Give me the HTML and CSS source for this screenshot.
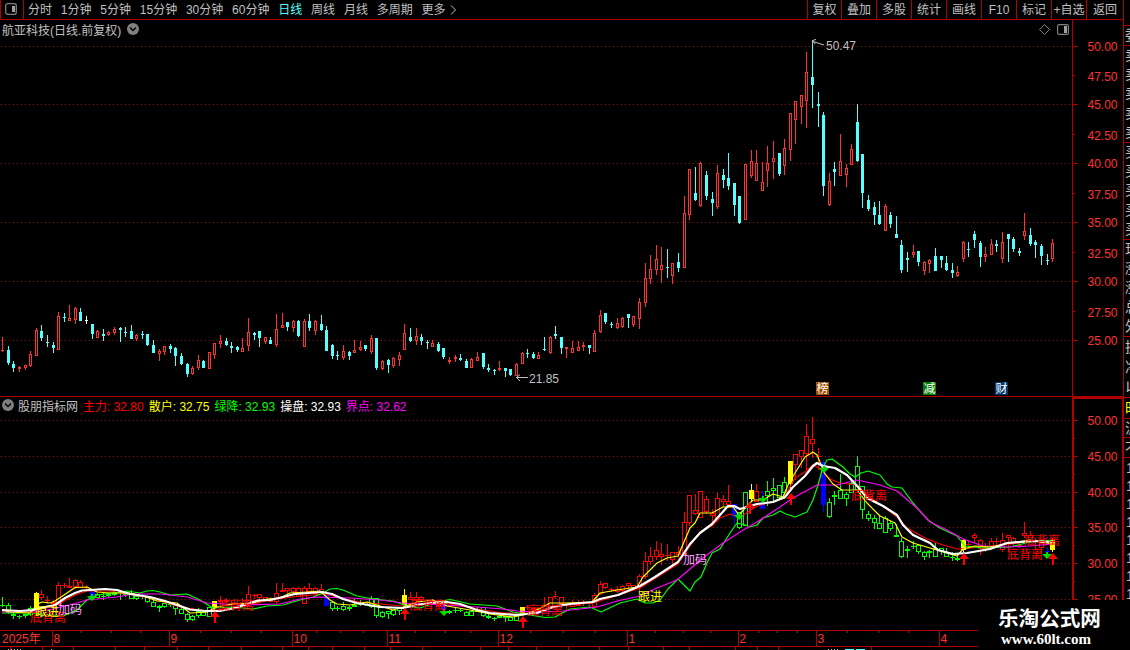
FILE: index.html
```html
<!DOCTYPE html>
<html lang="zh-CN">
<head>
  <meta charset="UTF-8" />
  <title>航亚科技 日线</title>
  <link rel="stylesheet" href="styles.css">
</head>
<body>

  <div class="toolbar">
    <div class="panel-btn">
      <svg width="12" height="12" viewBox="0 0 12 12"><rect x=".7" y=".7" width="10.6" height="10.6" rx="2" fill="none" stroke="#808080" stroke-width="1.3"/><rect x="7" y="3" width="3" height="6" fill="#a0a0a0"/></svg>
    </div>
    <div class="periods">
      <span>分时</span><span>1分钟</span><span>5分钟</span><span>15分钟</span><span>30分钟</span><span>60分钟</span><span class="active">日线</span><span>周线</span><span>月线</span><span>多周期</span><span class="more">更多</span>
      <svg width="7" height="10" viewBox="0 0 7 10"><path d="M1 0.5L5.5 5L1 9.5" fill="none" stroke="#c0c0c0"/></svg>
    </div>
    <div class="actions">
      <span>复权</span><span>叠加</span><span>多股</span><span>统计</span><span>画线</span><span>F10</span><span>标记</span><span>+自选</span><span>返回</span>
    </div>
  </div>

  <div class="content">
    <div class="charts">
      <div class="pane price">
        <svg id="price" width="1123" height="377" viewBox="0 20 1123 377"></svg>
        <div class="title">
          <span>航亚科技(日线.前复权)</span>
          <svg width="12" height="12" viewBox="0 0 12 12"><circle cx="6" cy="6" r="6" fill="#808080"/><path d="M3 4.5L6 7.5L9 4.5" fill="none" stroke="#000" stroke-width="1.5"/></svg>
        </div>
        <div class="tools">
          <svg width="11" height="11" viewBox="0 0 11 11"><path d="M5.5 .5L10.5 5.5L5.5 10.5L.5 5.5Z" fill="none" stroke="#808080"/></svg>
          <svg width="12" height="11" viewBox="0 0 12 11"><rect x=".6" y=".6" width="10.8" height="9.8" rx="1.5" fill="none" stroke="#808080" stroke-width="1.2"/><rect x="7" y="2" width="3" height="7" fill="#a0a0a0"/></svg>
        </div>
      </div>

      <div class="pane indicator">
        <svg id="indicator" width="1123" height="233" viewBox="0 397 1123 233"></svg>
        <div class="legend">
          <svg width="12" height="12" viewBox="0 0 12 12"><circle cx="6" cy="6" r="6" fill="#808080"/><path d="M3 4.5L6 7.5L9 4.5" fill="none" stroke="#000" stroke-width="1.5"/></svg>
          <span class="name">股朋指标网</span>
          <span class="red">主力: 32.80</span>
          <span class="yellow">散户: 32.75</span>
          <span class="green">绿降: 32.93</span>
          <span class="white">操盘: 32.93</span>
          <span class="magenta">界点: 32.62</span>
        </div>
      </div>

      <svg id="timeline" width="1123" height="20" viewBox="0 630 1123 20"></svg>
    </div>

    <div class="quote">
      <div class="rows first"><span>委</span></div>
      <div class="rows"><span>卖</span><span>卖</span><span>卖</span><span>卖</span><span>卖</span></div>
      <div class="rows"><span>买</span><span>买</span><span>买</span><span>买</span><span>买</span></div>
      <div class="rows"><span>现</span><span>涨</span><span>涨</span><span>总</span><span>外</span></div>
      <div class="rows short"><span>换</span><span>净</span><span>以</span></div>
      <div class="rows tab"><span class="yellow">时</span></div>
      <div class="rows one"><span>沪</span></div>
      <div class="rows one"><span>不</span></div>
      <div class="ticks"><span>14</span><span>14</span><span>14</span><span>14</span><span>14</span><span>14</span><span>14</span><span>14</span></div>
    </div>
  </div>

  <div class="brand">
    <div class="brand-name">乐淘公式网</div>
    <div class="brand-url">www.60lt.com</div>
  </div>

  <script src="script.js"></script>
</body>
</html>
```

FILE: styles.css
```css
body {
  margin: 0;
  width: 1130px;
  height: 650px;
  overflow: hidden;
  background: #000;
  color: #c0c0c0;
  font-family: "Liberation Sans", "Noto Sans CJK SC", sans-serif;
  font-size: 12px;
  position: relative;
}

svg {
  display: block;
  flex: none;
}

.toolbar {
  display: flex;
  width: 1124px;
  height: 20px;
  box-sizing: border-box;
  border-bottom: 1px solid #b00000;
  border-right: 1px solid #b00000;
  line-height: 20px;
  white-space: nowrap;
}

.panel-btn {
  width: 22px;
  display: flex;
  align-items: center;
  justify-content: center;
  border-left: 1px solid #b00000;
  border-right: 1px solid #b00000;
}

.panel-btn svg {
  margin-right: 2px;
  margin-bottom: 2px;
}

.periods {
  display: flex;
  align-items: center;
  gap: 8.8px;
  padding-left: 4px;
  flex: 1;
}

.periods .active {
  color: #54ffff;
}

.periods .more {
  margin-right: -4px;
}

.actions {
  display: grid;
  grid-template-columns: 34px repeat(7, 35px) 37px;
  height: 19px;
}

.actions span {
  border-left: 1px solid #b00000;
  text-align: center;
  height: 19px;
}

.content {
  display: flex;
}

.charts {
  width: 1123px;
}

.pane {
  position: relative;
}

.title {
  position: absolute;
  left: 2px;
  top: 0;
  height: 18px;
  display: flex;
  align-items: center;
  gap: 6px;
}

.tools {
  position: absolute;
  left: 1039px;
  top: 4px;
  display: flex;
  gap: 7px;
}

.legend {
  position: absolute;
  left: 2px;
  top: 0;
  height: 16px;
  display: flex;
  align-items: center;
  gap: 5px;
  white-space: nowrap;
}

.legend .name {
  margin-left: -1px;
}

.red { color: #ff0000; }
.yellow { color: #ffff00; }
.green { color: #00ff00; }
.white { color: #ffffff; }
.magenta { color: #ff00ff; }

.candle-up { stroke: #ff3232; fill: #000; }
.candle-down { stroke: #54ffff; fill: #54ffff; }
.candle-flat { stroke: #fff; fill: #fff; }

.bar-r { stroke: #ff0000; fill: #000; }
.bar-g { stroke: #00ff00; fill: #000; }
.bar-y { stroke: #ffff00; fill: #ffff00; }
.bar-b { stroke: #0000ff; fill: #0000ff; }

.candles {
  shape-rendering: crispEdges;
}

.grid {
  stroke: #b00000;
  stroke-dasharray: 1 3;
  shape-rendering: crispEdges;
}

.frame {
  stroke: #b00000;
  fill: none;
  shape-rendering: crispEdges;
}

.axis-label {
  fill: #ff3232;
}

.note {
  fill: #c0c0c0;
}

.line {
  fill: none;
  stroke-linejoin: round;
}

.quote {
  width: 6px;
  height: 580px;
  overflow: hidden;
  border-left: 1px solid #b00000;
  font-size: 14px;
}

.rows {
  height: 96px;
  display: flex;
  flex-direction: column;
  justify-content: space-around;
  border-bottom: 1px solid #b00000;
  line-height: 19px;
  padding-left: 1px;
}

.rows.first {
  height: 19px;
  margin-top: 5px;
  border-top: 1px solid #b00000;
}

.rows.short {
  height: 60px;
}

.rows.tab {
  height: 20px;
}

.rows.one {
  height: 18px;
  margin-bottom: 1px;
}

.ticks {
  display: flex;
  flex-direction: column;
  line-height: 18px;
  padding-left: 2px;
}

.brand {
  position: absolute;
  left: 978px;
  top: 600px;
  width: 152px;
  height: 50px;
  background: #000;
  color: #fff;
}

.brand-name {
  margin: 5px 0 0 20px;
  font-size: 20.6px;
  line-height: 27px;
  font-weight: 600;
}

.brand-url {
  margin-left: 23px;
  font: bold 15px/15px "Liberation Serif", serif;
}
```

FILE: script.js
```javascript
// one row per day: high, body top, body bottom, low (pane y), u = up, d = down, f = flat
const days = `
337 350 351 352 u|346 350 363 365 d|361 364 368 372 d|366 367 369 372 u|365 365 368 370 u|351 354 366 367 u
328 330 356 356 u|325 331 338 341 d|335 342 343 347 d|342 345 348 353 d|312 316 350 350 u|313 317 318 322 d
305 318 321 321 u|307 308 320 324 u|308 312 321 321 d|316 320 321 324 f|324 324 334 339 d|330 331 338 338 u
329 334 336 341 d|331 332 335 336 u|327 329 333 335 u|327 328 330 342 d|327 332 333 337 d|325 331 339 339 d
334 335 339 341 u|331 334 335 339 d|334 334 345 346 d|340 345 353 353 d|349 351 354 361 u|346 346 352 355 u
344 346 349 353 d|347 348 356 366 d|353 356 364 365 d|363 364 374 377 d|366 368 374 375 u|355 360 368 370 u
360 361 368 368 d|352 352 369 369 u|343 343 355 359 u|335 341 344 348 u|338 341 345 346 d|342 346 348 353 d
346 347 350 352 d|338 348 352 352 u|318 332 346 351 u|332 333 335 340 d|331 331 338 347 d|337 337 342 344 u
337 340 344 344 d|314 329 345 347 u|313 325 328 328 u|322 322 327 331 d|320 321 328 332 u|320 321 336 337 d
319 321 347 347 u|314 321 328 331 d|320 321 331 335 u|315 324 330 331 d|326 330 351 351 d|344 345 356 359 d
351 355 356 360 d|345 351 358 360 u|351 352 356 360 d|340 350 353 353 u|341 347 350 351 u|345 345 349 351 d
335 338 352 354 u|338 338 368 370 d|360 361 369 370 u|359 360 365 373 d|357 358 366 368 u|352 355 360 366 u
324 333 350 350 u|328 337 341 342 d|328 336 341 345 u|334 337 341 345 d|340 342 343 349 d|340 343 347 347 u
342 344 351 352 d|348 348 357 359 d|357 360 362 364 u|355 357 359 362 u|354 358 360 361 d|359 361 368 368 d
358 359 368 368 u|352 357 361 361 u|353 353 367 369 d|364 368 370 372 d|369 370 371 375 d|361 368 370 371 u
368 368 371 377 d|369 369 375 376 d|363 364 376 376 u|352 353 364 364 u|349 353 354 358 d|352 354 358 359 d
352 355 359 359 u|337 349 350 351 d|336 337 353 354 u|326 334 336 339 d|337 337 348 354 d|347 347 349 358 u
341 348 353 353 u|341 347 351 351 u|342 345 347 351 u|345 345 348 354 d|330 333 352 352 u|310 315 332 333 u
313 313 322 324 d|322 324 325 328 d|318 323 328 329 u|317 318 327 328 u|314 314 318 328 d|316 316 325 327 u
298 302 319 329 u|263 278 303 307 u|255 269 279 284 u|245 259 270 275 u|247 265 270 283 u|249 267 268 278 d
263 263 276 284 u|253 262 268 272 d|196 213 268 268 u|169 169 215 220 u|167 193 200 201 d|162 163 206 207 u
171 175 196 200 d|192 199 203 216 d|165 173 207 209 u|169 175 180 188 d|153 178 186 190 d|183 183 205 216 d
196 196 223 224 d|164 164 220 220 u|150 161 176 178 u|150 163 181 181 u|162 182 191 191 u|146 163 171 187 u
141 158 162 179 u|153 153 174 176 d|139 148 166 175 u|113 113 150 161 u|101 101 120 144 u|95 95 107 124 u
52 72 101 128 u|40 77 85 108 d|92 104 106 127 d|112 115 186 196 d|173 181 205 206 u|162 169 172 186 d
134 161 176 176 u|164 168 175 187 u|144 149 165 165 u|104 122 161 162 d|154 154 193 208 d|195 200 209 211 d
202 207 215 225 d|201 215 224 225 d|204 206 231 231 u|212 215 224 228 d|216 234 238 238 d|240 245 270 273 d
252 258 260 272 d|245 252 255 258 u|251 251 262 266 d|261 262 271 275 u|259 260 264 273 u|248 256 271 271 d
256 256 260 268 d|256 263 270 271 d|263 270 273 278 d|266 272 276 277 u|241 242 259 262 u|242 249 250 257 d
231 234 240 248 d|241 243 257 267 d|247 254 257 262 u|239 244 255 255 u|240 244 246 252 d|232 242 259 263 u
234 234 239 262 d|237 239 249 252 d|248 251 253 256 d|213 231 236 240 u|228 235 244 246 d|240 242 245 258 d
244 246 256 265 d|254 260 261 265 d|239 243 259 262 u`
  .trim().split(/[|\n]/).map(r => r.split(" ")).map(r => [+r[0], +r[1], +r[2], +r[3], r[4]]);

const xOf = i => Math.floor(2.75 + i * 5.585);

function candle(x, h, t, b, l, cls) {
  if (b - t < 2) {
    return `<path class="${cls}" d="M${x + .5} ${h}V${l}M${x - 1} ${t + .5}H${x + 2}"/>`;
  }
  return `<path class="${cls}" d="M${x + .5} ${h}V${l}"/><rect class="${cls}" x="${x - .5}" y="${t + .5}" width="2" height="${b - t - 1}"/>`;
}

const text = (x, y, s, cls, color) =>
  `<text x="${x}" y="${y}" class="${cls || ""}"${color ? ` fill="${color}"` : ""}>${s}</text>`;

function badge(x, s, color) {
  return `<rect x="${x}" y="382" width="13" height="13" fill="${color}"/>` + text(x + .5, 393, s, "", "#fff");
}

// price pane
let out = "";
[46, 104, 163, 222, 281, 340].forEach((y, i) => {
  out += `<path class="grid" d="M1 ${y + .5}H1072"/><path class="frame" d="M1073 ${y + .5}H1078"/>`;
  out += text(1087.5, y + 5, (50 - i * 5) + ".00", "axis-label");
});
[75, 134, 193, 252, 311].forEach((y, i) => {
  out += `<path class="frame" d="M1073 ${y + .5}H1075"/>` + text(1087.5, y + 6, (47.5 - i * 5) + "0", "axis-label");
});
out += `<path class="frame" d="M1072.5 20V396M0 396.5H1123"/><g class="candles">`;
days.forEach((d, i) => {
  out += candle(xOf(i), d[0], d[1], d[2], d[3], { u: "candle-up", d: "candle-down", f: "candle-flat" }[d[4]]);
});
out += `</g><path d="M824 45L813 41.5M812.5 44V40.5L816 39.5M813 41L815 44M528 377.5H516M520 374.5L516.5 377.5L520 381" fill="none" stroke="#c0c0c0"/>`;
out += text(826, 50, "50.47", "note") + text(529, 383, "21.85", "note");
out += badge(816, "榜", "#a05000") + badge(923, "减", "#008000") + badge(995, "财", "#003870");
document.getElementById("price").innerHTML = out;

// indicator pane
const toLow = y => Math.round(420.5 + (y - 46.5) * .609);
const states = [[6, "g"], [7, "y"], [16, "r"], [17, "b"], [38, "g"], [39, "y"], [58, "r"], [59, "b"], [72, "g"],
  [73, "y"], [79, "r"], [80, "b"], [93, "g"], [94, "y"], [131, "r"], [132, "b"], [134, "g"], [135, "y"], [136, "r"],
  [137, "b"], [141, "g"], [142, "y"], [147, "r"], [148, "b"], [172, "g"], [173, "y"], [187, "r"], [188, "b"], [189, "y"]];

const lines = [
  ["#ff0000", 1.2, "2,611 33,611 55,606 75,595 87,591 110,591 150,598 180,607 207,611 240,607 270,600 300,596 325,594 340,598 360,602 380,604 403,606 430,603 450,604 477,609 503,613 530,613 560,606 597,602 640,588 678,564 690,546 700,532 712,526 720,518 730,514 740,517 748,512 757,506 783,499 795,478 805,472 813,465 819,468 830,479 840,483 857,485 870,497 880,504 897,517 907,528 927,539 940,544 957,549 983,547 1010,544 1030,541 1052,542"],
  ["#00ff00", 1.2, "2,613 33,613 50,615 63,616 77,610 87,600 97,595 127,591 140,593 147,591 153,590.5 160,592 170,595 187,594 200,600 213,608 233,607 253,609 267,606 283,605 300,600 313,597 323,593 330,589 337,588.5 343,590 357,596 373,599 393,601 407,606 420,608 437,602 450,599.5 470,604 497,606 513,612 530,615 545,617.5 555,617 570,609 590,607 601,612 620,603 637,599 645,603 653,603 660,600 668,589 678,579 690,591 695,582 701,577 707,563 712,553 720,549 730,533 737,523 745,525 750,527 757,525 763,518 773,515 780,511 786,514 795,517 807,512 813,500 818,485 823,467 827,460 832,459 843,467 850,474 855,477 861,473 868,471 880,475 887,484 892,487 902,488 913,503 928,520 940,528 957,536 965,546 983,548 1010,547 1030,542 1052,540"],
  ["#ff00ff", 1.2, "2,612 33,612 53,609 77,603 87,600 117,597 133,594 160,594 187,597 207,603 240,605 280,604 300,599 317,597 350,598 380,600 403,603 443,605 477,607 503,609 517,611 540,612 563,611 597,607 617,601 640,596 657,588 677,580 690,569 703,558 723,543 740,532 757,522 780,507 793,498 817,485 837,485 857,480 880,485 897,491 917,508 930,522 947,530 963,539 983,546 1007,547 1030,546 1052,544"],
  ["#ffff00", 1.2, "2,610 10,612 30,613 38,604 42,602 50,603 55,601 67,593 75,587.5 87,587 97,592 110,593 130,593 143,596 157,601 177,603 190,613 207,612 217,607 233,604 253,603 267,599 280,598 290,593 307,592 320,591 330,600 337,604 350,605 367,602 377,605 393,610 403,607 417,602 433,600 447,606 470,610 490,614 513,617 523,615 537,610 550,603 567,603 592,602 600,593 617,590 637,587 643,577 657,563 667,558 678,556 690,528 695,523 700,513 712,513 723,507 733,507 739,515 745,508 753,500 763,500 773,494 783,497 788,485 795,473 805,457 813,452 817,455 825,474 833,484 842,490 857,490 867,503 880,516 895,523 902,537 913,543 930,548 957,556 963,549 975,546 990,547 1010,543 1030,540 1052,544"],
  ["#ffffff", 2.2, "2,610 20,611 33,610 45,607 55,605 65,598 75,593 82,590.5 105,589 117,590 130,594 150,597 165,601 180,606 190,609.5 205,611 220,611 235,608 245,604.5 258,600.5 270,600 283,597 295,594 322,592 332,594 343,599 357,603 380,607 403,608 417,605 430,603 447,602 460,604 477,610 490,613 517,615 537,613 550,608 557,606 570,604 593,602 600,599 618,595 640,586 655,577 678,562 690,544 700,533 712,524 728,506 734,506 740,509 757,504 773,502 785,497 793,487 805,476 813,466 817,463 823,466 835,468 847,475 858,487 867,498 883,506 897,515 903,525 913,535 930,543 938,550 953,554 967,553 990,549 1007,543 1033,541 1052,542"]
];

out = "";
[420, 456, 492, 527, 563, 599].forEach((y, i) => {
  out += `<path class="grid" d="M1 ${y + .5}H1072"/><path class="frame" d="M1074 ${y + .5}H1078"/>`;
  out += text(1087.5, y + 5, (50 - i * 5) + ".00", "axis-label");
});
[438, 474, 510, 545, 581].forEach(y => out += `<path class="frame" d="M1074 ${y + .5}H1075"/>`);
out += `<path class="frame" stroke-width="2" d="M1073 630V398H1123V600"/><g class="candles">`;
days.forEach((d, i) => {
  const x = xOf(i), c = states.find(s => i < s[0])[1];
  const [h, t, b, l] = d.slice(0, 4).map(toLow);
  out += `<path class="bar-${c}" d="M${x + .5} ${h}V${l}"/>`;
  out += b - t < 2
    ? `<path class="bar-${c}" d="M${x - 2} ${t + .5}H${x + 3}"/>`
    : `<rect class="bar-${c}" x="${x - 1.5}" y="${t + .5}" width="4" height="${b - t - 1}"/>`;
});
out += "</g>";
lines.forEach(l => out += `<polyline class="line" stroke-width="${l[1]}" stroke="${l[0]}" points="${l[2]}"/>`);

[[215, 611], [405, 608], [523, 616], [750, 502], [791, 493], [964, 553], [1053, 553]].forEach(([x, y]) => {
  out += `<path fill="#ff0000" d="M${x} ${y}L${x + 5} ${y + 6}H${x + 1}V${y + 12}H${x - 1}V${y + 6}H${x - 5}Z"/>`;
});
[[92, 601], [444, 616], [739, 520], [763, 503], [824, 473], [1047, 559]].forEach(([x, y]) => {
  out += `<path fill="#00dc00" d="M${x} ${y}L${x + 5} ${y - 5}H${x + 1}V${y - 7}H${x - 1}V${y - 5}H${x - 5}Z"/>`;
});
[[30, 622], [218, 610], [410, 610], [527, 615], [851, 500], [1024, 545], [1007, 559]].forEach(([x, y]) => {
  out += text(x, y, "底背离", "", "#ff0000");
});
out += text(35, 616, "跟进", "", "#ffff00") + text(638, 601, "跟进", "", "#ffff00");
out += text(58, 614, "加码", "", "#ffa0ff") + text(683, 564, "加码", "", "#ffa0ff");
document.getElementById("indicator").innerHTML = out;

// timeline
out = `<path class="frame" d="M0 630.5H978M0 646.5H978"/>`;
out += text(2, 643, "2025年", "axis-label");
[[52, 8], [169, 9], [292, 10], [387, 11], [498, 12], [627, 1], [738, 2], [816, 3], [939, 4]].forEach(([x, m]) => {
  out += `<path class="frame" d="M${x + .5} 631V646"/>` + text(x + 1.5, 643, m, "axis-label");
});
[81, 111, 140, 200, 231, 261, 316, 340, 363, 415, 445, 470, 530, 563, 595, 655, 683, 710, 758, 777, 797, 847, 878, 908].forEach(x => {
  out += `<path class="frame" d="M${x + .5} 631V633"/>`;
});
[10, 42, 73, 115, 144, 177, 208, 241, 282, 308, 332, 364, 390, 422, 480, 508, 536, 568, 599, 628, 663, 689, 735, 757, 778, 871].forEach(x => {
  out += `<path class="frame" d="M${x + .5} 647V650"/>`;
});
out += `<path d="M8 649.5H21M51 649.5H52M828 649.5H840" stroke="#c0c0c0" stroke-dasharray="1 2"/><path d="M845 649.5H866" stroke="#54ffff" stroke-dasharray="9 2"/>`;
document.getElementById("timeline").innerHTML = out;
```
